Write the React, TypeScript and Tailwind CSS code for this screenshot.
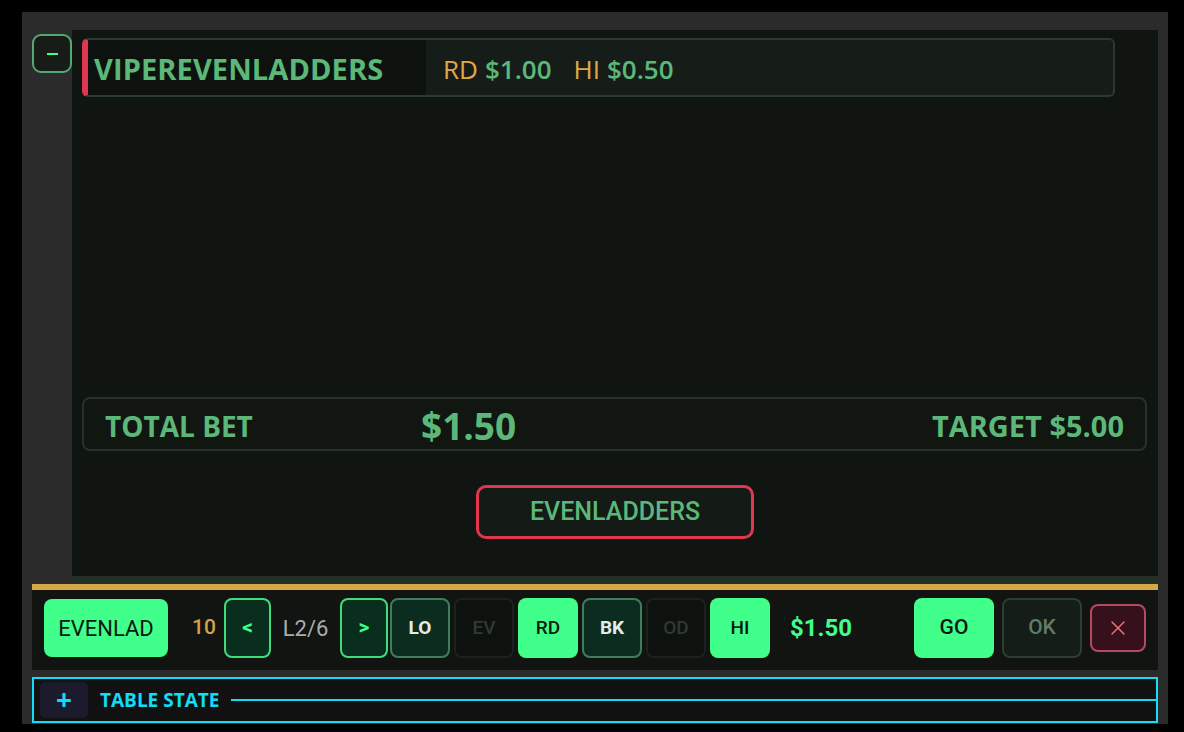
import { X } from "lucide-react";

const SANS = "font-['Open_Sans','Noto_Sans',sans-serif]";
const ROBOTO = "font-['Roboto','Liberation_Sans',sans-serif]";

type Chip = { label: string; kind: "on" | "sel" | "off" };

const chips: Chip[] = [
  { label: "LO", kind: "sel" },
  { label: "EV", kind: "off" },
  { label: "RD", kind: "on" },
  { label: "BK", kind: "sel" },
  { label: "OD", kind: "off" },
  { label: "HI", kind: "on" },
];

const chipStyle = {
  on: "bg-[#40ff8a] text-[#0b1a10] font-medium",
  sel: "bg-[#0b2c1e] border-2 border-[#3f7e5a] text-[#e3ece6] font-bold",
  off: "bg-[#0e120f] border-2 border-[#1c221e] text-[#2e3a33] font-medium",
};

const Header = () => (
  <div className="flex h-[59px] w-[1033px] rounded-[6px] border-2 border-l-[6px] border-[#2a3a30] border-l-[#e0364f] bg-[#161d19] overflow-hidden">
    <div className="flex w-[338px] items-center bg-[#0d120e] pl-[6px] pt-[3px]">
      <span className={`${SANS} text-[29px] font-bold text-[#5cb878] tracking-[0.1px]`}>
        VIPEREVENLADDERS
      </span>
    </div>
    <div className={`${SANS} flex items-center pl-[17px] pt-[3px] text-[26px]`}>
      <span className="text-[#e0a946]">RD</span>
      <span className="ml-[7px] font-semibold text-[#5cb878]">$1.00</span>
      <span className="ml-[22px] text-[#e0a946]">HI</span>
      <span className="ml-[7px] font-semibold text-[#5cb878]">$0.50</span>
    </div>
  </div>
);

const TotalBar = () => (
  <div className={`${SANS} flex h-[54px] items-center rounded-[8px] border-2 border-[#26332b] bg-[#111611] px-[21px] pt-[4px] text-[#5cb878] font-bold`}>
    <span className="w-[316px] text-[28px]">TOTAL BET</span>
    <span className="text-[37px]">$1.50</span>
    <span className="ml-auto text-[29px]">TARGET $5.00</span>
  </div>
);

const BottomBar = () => (
  <div className={`${ROBOTO} flex h-[86px] items-center border-t-[6px] border-[#d6a746] bg-[#111411] pl-[12px] pb-[4px]`}>
    <button className="flex h-[58px] w-[124px] items-center justify-center rounded-[8px] bg-[#40ff8a] text-[22px] text-[#0b1a10]">
      EVENLAD
    </button>
    <span className="ml-[24px] w-[23px] text-[21px] font-medium text-[#d4a348]">10</span>
    <button className="ml-[9px] flex h-[60px] w-[47px] items-center justify-center rounded-[8px] border-2 border-[#3fdc7a] bg-[#0a2e1e] text-[21px] font-bold text-[#40ff8a]">
      &lt;
    </button>
    <span className="w-[69px] text-center text-[22px] text-[#a9aeab]">L2/6</span>
    <button className="flex h-[60px] w-[48px] items-center justify-center rounded-[8px] border-2 border-[#3fdc7a] bg-[#0a2e1e] text-[21px] font-bold text-[#40ff8a]">
      &gt;
    </button>
    <div className="ml-[2px] flex gap-[4px]">
      {chips.map((c) => (
        <button
          key={c.label}
          className={`flex h-[60px] w-[60px] items-center justify-center rounded-[8px] text-[19px] ${chipStyle[c.kind]}`}
        >
          {c.label}
        </button>
      ))}
    </div>
    <span className="ml-[20px] w-[124px] text-[24px] font-bold text-[#40ff8a]">$1.50</span>
    <button className="flex h-[60px] w-[80px] items-center justify-center rounded-[8px] bg-[#40ff8a] text-[21px] font-medium text-[#0b1a10]">
      GO
    </button>
    <button className="ml-[8px] flex h-[60px] w-[80px] items-center justify-center rounded-[8px] border-2 border-[#2c3e32] bg-[#151d18] text-[21px] font-medium text-[#5f7c69]">
      OK
    </button>
    <button className="ml-[8px] flex h-[48px] w-[56px] items-center justify-center rounded-[8px] border-2 border-[#b34a60] bg-[#36111b]">
      <X size={24} strokeWidth={1.5} className="text-[#f0707f]" />
    </button>
  </div>
);

const TableState = () => (
  <div className="flex h-[46px] items-center border-2 border-[#12dcf6] bg-[#111111] pl-[6px]">
    <button className="flex h-[36px] w-[48px] items-center justify-center rounded-[5px] bg-[#1b1b2d] pb-[2px] text-[28px] font-bold leading-none text-[#12dcf6]">
      +
    </button>
    <span className={`${SANS} ml-[12px] text-[19px] font-bold text-[#12dcf6]`}>TABLE STATE</span>
    <div className="ml-[12px] h-[2px] flex-1 bg-[#12dcf6]" />
  </div>
);

export default function App() {
  return (
    <div className="h-[732px] w-[1184px] overflow-hidden bg-black pl-[22px] pt-[12px]">
      <div className="h-[712px] w-[1146px] bg-[#2b2b2b] px-[10px] pt-[18px]">
        <div className="flex">
          <div className="w-[40px] pt-[4px]">
            <button className="flex h-[39px] w-[40px] items-center justify-center rounded-[9px] border-2 border-[#55a871] bg-[#171c19]">
              <span className="block h-[2px] w-[11px] bg-[#40ff8a]" />
            </button>
          </div>
          <div className="flex h-[546px] w-[1086px] flex-col bg-[#101512] px-[10px] pt-[8px] pb-[37px]">
            <Header />
            <div className="flex-1" />
            <div className="pr-[1px]">
              <TotalBar />
            </div>
            <div className="mt-[34px] flex justify-center">
              <button className={`${ROBOTO} flex h-[54px] w-[278px] items-center justify-center rounded-[10px] border-[3px] border-[#e0364f] bg-[#141a16] text-[25px] font-medium text-[#5cb878]`}>
                EVENLADDERS
              </button>
            </div>
          </div>
        </div>
        <div className="ml-[40px] h-[8px] bg-[#243027]" />
        <BottomBar />
        <div className="h-[7px]" />
        <TableState />
      </div>
    </div>
  );
}
